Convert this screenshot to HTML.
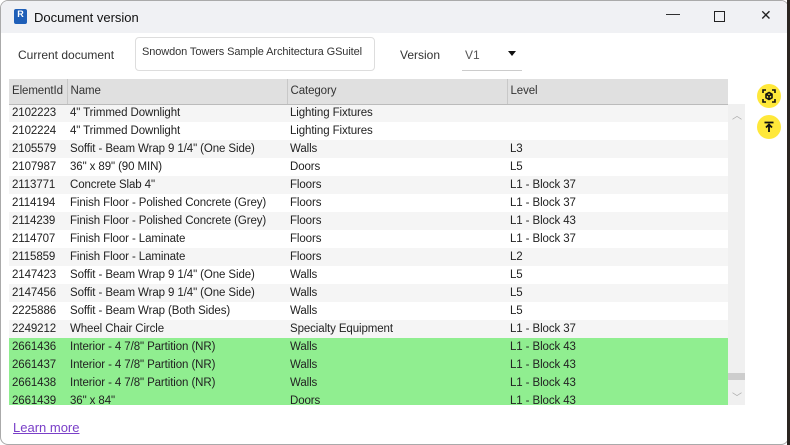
<!DOCTYPE html>
<html><head><style>
*{margin:0;padding:0;box-sizing:border-box}
body{width:790px;height:445px;background:#fff;font-family:"Liberation Sans",sans-serif;font-size:12px;color:#222;position:relative;overflow:hidden}
.win{position:absolute;left:0;top:0;width:789px;height:445px;border:1px solid #aaa;border-radius:8px;overflow:hidden;background:#fff}
.title{height:32px;background:#f0f1f4;position:relative}
.title .ic{position:absolute;left:13px;top:8px;width:13px;height:15px;background:#1f5fb8;border-radius:2px;color:#fff;font-size:9px;font-weight:bold;text-align:center;line-height:11px}
.title .t{position:absolute;left:33px;top:9px;font-size:13px;color:#111}
.tb{position:absolute;top:8px;font-size:14px;color:#222}
.lbl{position:absolute;font-size:12px;color:#333}
.inp{position:absolute;left:134px;top:36px;width:240px;height:34px;border:1px solid #ddd;border-radius:4px;padding:8px 6px;font-size:11px;color:#333;white-space:nowrap;overflow:hidden;letter-spacing:-0.1px}
.tw{position:absolute;left:8px;top:78px;width:719px;height:326px;overflow:hidden}
table{width:719px;border-collapse:collapse;table-layout:fixed}
td,th{height:18px;padding:0 3px;font-weight:normal;text-align:left;white-space:nowrap;overflow:hidden;font-size:11.5px;letter-spacing:-0.1px}
th{height:25px;background:#e0e0e0;border-right:1px solid #c8c8c8;border-bottom:1px solid #bbb;color:#333}
tr:nth-child(even) td{background:#f5f5f5}
tr.g td{background:#90ee90!important}
.sb{position:absolute;left:727px;top:78px;width:17px;height:326px;background:#f0f0f0}
.btn{position:absolute;left:756px;width:24px;height:24px;border-radius:50%;background:#ffe83a}
</style></head><body><div class="win">
<div class="title"><div class="ic">R</div><div class="t">Document version</div>
<div class="tb" style="left:665px;top:4px">—</div>
<div style="position:absolute;left:713px;top:10px;width:11px;height:11px;border:1.5px solid #222"></div>
<div class="tb" style="left:759px;top:6px">✕</div></div>
<div class="lbl" style="left:17px;top:47px">Current document</div>
<div class="inp">Snowdon Towers Sample Architectura GSuitel</div>
<div class="lbl" style="left:399px;top:47px">Version</div>
<div class="lbl" style="left:464px;top:47px;color:#555">V1</div>
<div style="position:absolute;left:507px;top:50px;border-left:4px solid transparent;border-right:4px solid transparent;border-top:5px solid #111"></div>
<div style="position:absolute;left:461px;top:69px;width:60px;border-top:1px solid #ccc"></div>
<div class="tw"><table>
<colgroup><col style="width:58px"><col style="width:220px"><col style="width:220px"><col style="width:221px"></colgroup>
<tr><th>ElementId</th><th>Name</th><th>Category</th><th>Level</th></tr>
<tr><td>2102223</td><td>4" Trimmed Downlight</td><td>Lighting Fixtures</td><td></td></tr>
<tr><td>2102224</td><td>4" Trimmed Downlight</td><td>Lighting Fixtures</td><td></td></tr>
<tr><td>2105579</td><td>Soffit - Beam Wrap 9 1/4" (One Side)</td><td>Walls</td><td>L3</td></tr>
<tr><td>2107987</td><td>36" x 89" (90 MIN)</td><td>Doors</td><td>L5</td></tr>
<tr><td>2113771</td><td>Concrete Slab 4"</td><td>Floors</td><td>L1 - Block 37</td></tr>
<tr><td>2114194</td><td>Finish Floor - Polished Concrete (Grey)</td><td>Floors</td><td>L1 - Block 37</td></tr>
<tr><td>2114239</td><td>Finish Floor - Polished Concrete (Grey)</td><td>Floors</td><td>L1 - Block 43</td></tr>
<tr><td>2114707</td><td>Finish Floor - Laminate</td><td>Floors</td><td>L1 - Block 37</td></tr>
<tr><td>2115859</td><td>Finish Floor - Laminate</td><td>Floors</td><td>L2</td></tr>
<tr><td>2147423</td><td>Soffit - Beam Wrap 9 1/4" (One Side)</td><td>Walls</td><td>L5</td></tr>
<tr><td>2147456</td><td>Soffit - Beam Wrap 9 1/4" (One Side)</td><td>Walls</td><td>L5</td></tr>
<tr><td>2225886</td><td>Soffit - Beam Wrap (Both Sides)</td><td>Walls</td><td>L5</td></tr>
<tr><td>2249212</td><td>Wheel Chair Circle</td><td>Specialty Equipment</td><td>L1 - Block 37</td></tr>
<tr class="g"><td>2661436</td><td>Interior - 4 7/8" Partition (NR)</td><td>Walls</td><td>L1 - Block 43</td></tr>
<tr class="g"><td>2661437</td><td>Interior - 4 7/8" Partition (NR)</td><td>Walls</td><td>L1 - Block 43</td></tr>
<tr class="g"><td>2661438</td><td>Interior - 4 7/8" Partition (NR)</td><td>Walls</td><td>L1 - Block 43</td></tr>
<tr class="g"><td>2661439</td><td>36" x 84"</td><td>Doors</td><td>L1 - Block 43</td></tr>
</table></div>
<div class="sb"><div style="position:absolute;left:0;top:0;width:17px;height:25px;background:#fff"></div>
<div style="position:absolute;left:4px;top:28px;color:#aaa;font-size:10px">︿</div>
<div style="position:absolute;left:0;top:294px;width:17px;height:7px;background:#cdcdcd"></div>
<div style="position:absolute;left:4px;top:310px;color:#aaa;font-size:10px">﹀</div></div>
<div class="btn" style="top:83px"><svg width="24" height="24" viewBox="0 0 24 24" fill="none" stroke="#111" stroke-width="1.6"><path d="M6 9V6h3M15 6h3v3M18 15v3h-3M9 18H6v-3"/><path d="M12 8.5l3 1.7v3.6L12 15.5l-3-1.7v-3.6z M9 10.2l3 1.7 3-1.7M12 11.9v3.6"/></svg></div>
<div class="btn" style="top:114px"><svg width="24" height="24" viewBox="0 0 24 24" fill="none" stroke="#111" stroke-width="1.8"><path d="M7.5 7.5h9M12 17V10M9 12.5l3-3 3 3"/></svg></div>
<div style="position:absolute;left:12px;top:419px;font-size:13px;color:#7a3fc8;text-decoration:underline">Learn more</div>
</div>
<div style="position:absolute;left:787px;top:0;width:3px;height:445px;background:#2a2520"></div>
</body></html>
